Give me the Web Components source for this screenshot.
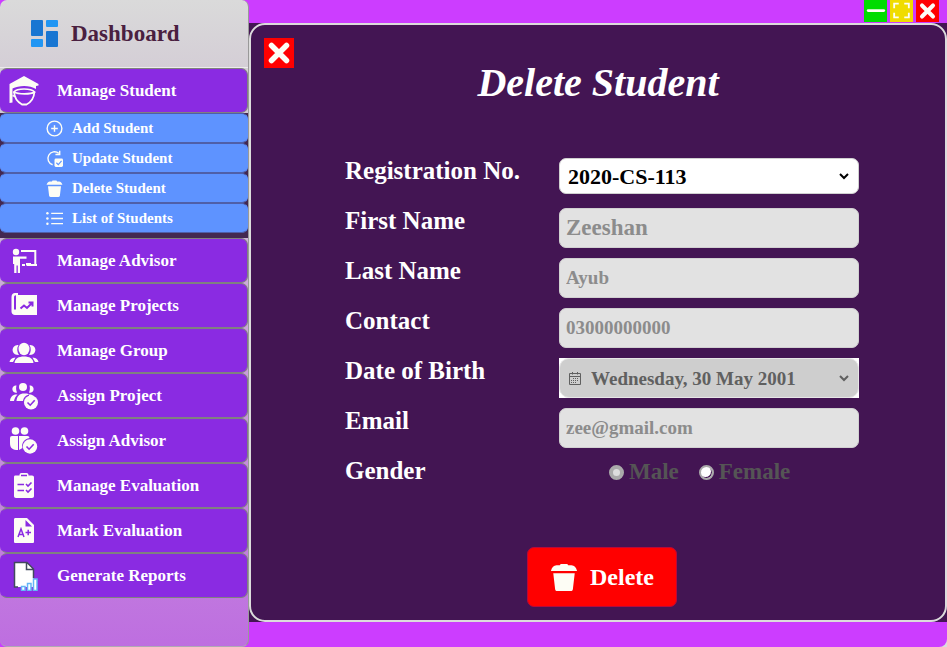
<!DOCTYPE html>
<html lang="en">
<head>
<meta charset="utf-8">
<title>Delete Student</title>
<style>
html, body { margin: 0; height: 100%; }
body { background: #dcdcdc; font-family: Georgia, "Liberation Serif", serif; font-weight: 700; }
</style>
</head>
<body>
<student-app></student-app>
<script>
const svg = (box, body) => `<svg viewBox="0 0 ${box} ${box}" aria-hidden="true">${body}</svg>`;
const ICONS = {
  dashboard: svg(28, '<path fill="#1976d2" d="M2 0h9a1 1 0 0 1 1 1v14a1 1 0 0 1-1 1H1a1 1 0 0 1-1-1V1a1 1 0 0 1 1-1zM16 11h10a1 1 0 0 1 1 1v14a1 1 0 0 1-1 1H16a1 1 0 0 1-1-1V12a1 1 0 0 1 1-1z"/><path fill="#2196f3" d="M16 0h10a1 1 0 0 1 1 1v5a1 1 0 0 1-1 1H16a1 1 0 0 1-1-1V1a1 1 0 0 1 1-1zM1 19h10a1 1 0 0 1 1 1v6a1 1 0 0 1-1 1H1a1 1 0 0 1-1-1v-6a1 1 0 0 1 1-1z"/>'),
  student: svg(30, '<path d="M15 0 29.500 8v1.500L27 10v3C21 9 10 9 3.500 12.500V26.500L.5 27V8z"/><path d="M5 16C8 12 22 12 25.500 16 22 18.500 9 18.500 5 16z" fill="none" stroke="currentColor" stroke-width="1.600"/><path d="M5 15.500c.3 6.500 4.500 11 8 13h4.500c4-2 7.500-6.500 8-13" fill="none" stroke="currentColor" stroke-width="1.800"/><path d="M3.500 19.500l2.500 1" stroke="currentColor" stroke-width="1.500"/>'),
  add: svg(18, '<g fill="none" stroke="currentColor" stroke-width="1.500"><circle cx="9" cy="9" r="7.800"/><path d="M9 5.500v7M5.500 9h7"/></g>'),
  update: svg(18, '<path d="M13.500 3.500A7 7 0 1 0 7 15.600M14.500.8v4h-4.500" fill="none" stroke="currentColor" stroke-width="1.500"/><rect x="9" y="9" width="9" height="9" rx="1.500"/><path d="m11 13.500 2 2 3.500-4" fill="none" stroke="#5e93ff" stroke-width="1.200"/>'),
  trash: svg(30, '<path d="M10.500 2.500 11.500 1h7l1 1.500h3.500c3 0 5 2.500 6 6H1c1-3.500 3-6 6-6zM3.500 11h23l-2 17c-.2 1.300-1 2-2.500 2H8c-1.500 0-2.300-.7-2.500-2z"/>'),
  list: svg(18, '<path d="M5.500 3.500H18M5.500 9H18M5.500 14.500H18" stroke="currentColor" stroke-width="1.400"/><circle cx="1.500" cy="3.500" r="1.300"/><circle cx="1.500" cy="9" r="1.300"/><circle cx="1.500" cy="14.500" r="1.300"/>'),
  advisor: svg(30, '<circle cx="7" cy="6" r="3.200"/><path d="M4 10.500h13.500v2.200H11V27H8.800v-7.500H7.500V27H5.200v-9H4z"/><path d="M12 5h14.300v14H17.500M24 19h4M13 19h3" fill="none" stroke="currentColor" stroke-width="2"/><path d="M17 17h5v2h-5z"/>'),
  projects: svg(30, '<path d="M9 4h19v20H6c-2 0-3.500-1.200-3.500-3.500V6C2.500 3.500 4 2 6 2h3z"/><path d="M5 6.500c0-1.500.6-2.300 2-2.300V18.500H5z" fill="#8a2be2"/><path d="m11.500 17.500 3.500-3 3 2.500 5-5M19.500 11.500h4v4" fill="none" stroke="#8a2be2" stroke-width="2"/>'),
  group: svg(30, '<path d="M6.500 9.500a5 5 0 0 1 3-.5c-2 3.500-1.500 7 .5 10l-2.500-.2C3 17.500 2 12 6.500 9.500zM23.500 9.500a5 5 0 0 0-3-.5c2 3.500 1.500 7-.5 10l2.500-.2C27 17.500 28 12 23.500 9.500zM.5 26c.3-2.500 2-4 6-4.600L4 26zM29.500 26c-.3-2.500-2-4-6-4.600L26 26z"/><ellipse cx="15" cy="13" rx="5.500" ry="6.200"/><path d="M5.500 27c.5-4.500 4-6.500 9.500-6.500s9 2 9.500 6.500z"/>'),
  assignProject: svg(30, '<circle cx="14" cy="6" r="4"/><path d="M7.500 4.500c-3 0-4.500 2-4 4.500s3 3 4.500 2.500c-1-2.500-1.200-4.500-.5-7zM20.500 4.500c3 0 4.500 2 4 4.500s-3 3-4.500 2.500c1-2.500 1.200-4.500.5-7zM1 20c.5-4.500 3-7 7.500-6.500C6.500 15.500 5.500 17.500 5 20zM7.500 20c.5-5.500 3.500-8 9-7.500 1.500 0 2.700.4 3.500 1-4 1-5.500 3.500-6 6.500zM20 13.500h2l3 1.500h-5z"/><circle cx="22" cy="21.500" r="7"/><path d="m18.500 21.500 2.700 2.700 4.500-5" fill="none" stroke="#8a2be2" stroke-width="1.600"/>'),
  assignAdvisor: svg(30, '<circle cx="6.500" cy="5" r="3.800"/><circle cx="15.500" cy="5" r="3.800"/><path d="M1 12q0-2 2-2h6v14c-5 0-8-1.500-8-7zM10 10h8.500q2 0 2 2c-5 1-8.500 5-7 10l-3.500 2z"/><circle cx="21" cy="20.500" r="7.200"/><path d="m17.500 20.500 2.600 2.700 4.600-5" fill="none" stroke="#8a2be2" stroke-width="1.600"/>'),
  evaluation: svg(30, '<path d="M6 4.500h4.500V4c0-1.200.8-2 2-2h5c1.200 0 2 .8 2 2v.5H23c1.300 0 2 .7 2 2V25c0 1.300-.7 2-2 2H7c-1.300 0-2-.7-2-2V6.500c0-1.300.3-2 1-2z"/><path d="M12 4.500h6M8.500 13.500H15M8.500 19.500H15M17 13l2 2 3.500-3.500M17 19l2 2 3.500-3.500" fill="none" stroke="#8a2be2" stroke-width="1.600"/>'),
  mark: svg(30, '<path d="M6.500 2H18l7 7v16.500c0 1-.5 1.500-1.500 1.500h-17c-1 0-1.500-.5-1.500-1.500v-22C5 2.500 5.500 2 6.500 2z"/><path d="M9 21l3-8 3 8M10.200 18.500h3.800M16.500 16.500H22M19.200 13.800v5.500" fill="none" stroke="#8a2be2" stroke-width="1.500"/><path d="M16.500 4v6.500H23z" fill="#8a2be2"/>'),
  reports: svg(30, '<path d="M5.500 1.500h12.500l6.500 6.500v18h-19z" fill="#fff"/><path d="M9 26H5.500V1.500H18l6.500 6.500v9M17.500 2v6.500H24" fill="none" stroke="#424a5e" stroke-width="1.500"/><g fill="#fff" stroke="#64b5f6" stroke-width="1.500"><path d="M12.500 25.500H16v4h-3.500zM18.500 22.500H22v7h-3.500zM24.500 18H28v11.500h-3.500z"/></g>'),
  close: svg(30, '<path d="M7.500 7.500l15 15M22.500 7.500l-15 15" stroke="currentColor" stroke-width="5.500" stroke-linecap="round"/>'),
  minimize: svg(24, '<path d="M4 11.500h17" stroke="currentColor" stroke-width="3" stroke-linecap="round"/>'),
  maximize: svg(24, '<path d="M4 9V4h5M15 4h5v5M20 14v5h-5M9 19H4v-5" fill="none" stroke="currentColor" stroke-width="2"/>'),
  calendar: svg(14, '<path d="M1.500 2.500h11v11h-11zM1.500 5.500h11M4.500 1v2.500M9.500 1v2.500" fill="none" stroke="currentColor"/><path d="M5 7.500h6M3 9.500h8M3 11.500h6" stroke="currentColor" stroke-dasharray="1 1"/>'),
  chevron: svg(10, '<path d="m1 3 4 4 4-4" fill="none" stroke="currentColor" stroke-width="2"/>')
};

class Base extends HTMLElement {
  connectedCallback() {
    if (this.shadowRoot) return;
    this.attachShadow({ mode: "open" }).innerHTML =
      `<style>*{box-sizing:border-box}button,input,select{font:inherit}${this.css()}</style>${this.html()}`;
  }
}

customElements.define("app-icon", class extends Base {
  css() { return `:host{display:block;flex:none}svg{display:block;width:100%;height:100%;fill:currentColor}`; }
  html() { return ICONS[this.getAttribute("name")]; }
});

customElements.define("nav-item", class extends Base {
  css() { return `:host{display:block;font-size:17px}
    button{display:flex;align-items:center;gap:18px;width:100%;height:45px;padding:0 8px;border:1px solid #808080;border-left-color:#8a2be2;border-radius:7px;background:#8a2be2;color:#fff;cursor:pointer}
    app-icon{width:30px;height:30px;color:#fdfdf5}`; }
  html() { return `<button type="button"><app-icon name="${this.getAttribute("icon")}"></app-icon><slot></slot></button>`; }
});

customElements.define("sub-item", class extends Base {
  css() { return `:host{display:block;font-size:15px}
    button{display:flex;align-items:center;gap:9px;width:100%;height:30px;padding:0 45px;border:1px solid #4f5fa8;border-left-color:#5e93ff;border-right-color:#5e93ff;border-radius:6px;background:#5e93ff;color:#fff;cursor:pointer}
    app-icon{width:17px;height:17px;color:#fdfdf5}`; }
  html() { return `<button type="button"><app-icon name="${this.getAttribute("icon")}"></app-icon><slot></slot></button>`; }
});

customElements.define("side-nav", class extends Base {
  css() { return `:host{display:block;box-sizing:border-box;border-right:1px solid #999;border-bottom:1px solid #b0a8b4;border-radius:7px;overflow:hidden;background:linear-gradient(#dadada,#d4ced6 68px,#be6ee0)}
    header{display:flex;align-items:center;gap:12px;height:68px;padding:0 31px;border-bottom:1px solid #ececec;font-size:23px;color:#4a2040}
    header app-icon{width:28px;height:28px}
    .sub{height:125px;background:#432850}`; }
  html() { return `<header><app-icon name="dashboard"></app-icon><span>Dashboard</span></header>
    <nav>
      <nav-item icon="student">Manage Student</nav-item>
      <div class="sub">
        <sub-item icon="add">Add Student</sub-item>
        <sub-item icon="update">Update Student</sub-item>
        <sub-item icon="trash">Delete Student</sub-item>
        <sub-item icon="list">List of Students</sub-item>
      </div>
      <nav-item icon="advisor">Manage Advisor</nav-item>
      <nav-item icon="projects">Manage Projects</nav-item>
      <nav-item icon="group">Manage Group</nav-item>
      <nav-item icon="assignProject">Assign Project</nav-item>
      <nav-item icon="assignAdvisor">Assign Advisor</nav-item>
      <nav-item icon="evaluation">Manage Evaluation</nav-item>
      <nav-item icon="mark">Mark Evaluation</nav-item>
      <nav-item icon="reports">Generate Reports</nav-item>
    </nav>`; }
});

customElements.define("icon-button", class extends Base {
  css() { return `:host{display:block}
    button{display:block;width:100%;height:100%;padding:0;border:0;background:var(--fill,#f00);color:#fdfdf5;cursor:pointer}
    app-icon{width:100%;height:100%}`; }
  html() { return `<button type="button" aria-label="${this.getAttribute("label")}"><app-icon name="${this.getAttribute("icon")}"></app-icon></button>`; }
});

customElements.define("form-row", class extends Base {
  css() { return `:host{display:grid;grid-template-columns:214px 1fr;align-items:start;height:50px}
    label{font-size:25px;line-height:26px;color:#fff}
    .box{position:relative;display:block}
    input,select{display:block;width:100%;height:40px;margin:0;padding:0 6px;border:1px solid #d0d0d0;border-radius:7px;outline:0;appearance:none;background:#e2e2e2;color:#8c8c8c;font-size:19px;opacity:1}
    input.big{font-size:23px}
    select.live{height:36px;background:#fff;color:#000;font-size:22px;padding:0 8px}
    .date{background:#fff}
    .date select{background:#cecece;border-color:#e6e6e6;border-radius:10px;color:#606060;padding:0 31px}
    .chev{position:absolute;right:10px;top:0;bottom:0;margin:auto;width:10px;height:10px;color:#000;pointer-events:none}
    .date app-icon{color:#606060}
    .cal{position:absolute;left:9px;top:0;bottom:0;margin:auto;width:14px;height:14px;pointer-events:none}`; }
  html() {
    const v = this.getAttribute("value"), l = this.getAttribute("label"), k = this.getAttribute("kind");
    const chev = '<app-icon class="chev" name="chevron"></app-icon>';
    const field = k === "select" ? `<select id="f" class="live"><option>${v}</option></select>${chev}`
      : k === "date" ? `<select id="f" disabled><option>${v}</option></select><app-icon class="cal" name="calendar"></app-icon>${chev}`
      : `<input id="f" class="${k || ""}" type="text" value="${v}" disabled>`;
    return `<label for="f">${l}</label><span class="box ${k === "date" ? "date" : ""}">${field}</span>`;
  }
});

customElements.define("gender-row", class extends Base {
  css() { return `:host{display:block;height:50px}
    fieldset{display:grid;grid-template-columns:214px 1fr;min-width:0;margin:0;padding:0;border:0;line-height:26px}
    .title{font-size:25px;color:#fff}
    .choices{display:flex;gap:20px;padding-left:50px;padding-top:1px}
    label{display:flex;align-items:center;gap:5px;font-size:23px;color:#555}
    input{appearance:none;width:15px;height:15px;margin:0;border:2px solid #aaa;border-radius:50%;background:#fff}
    input:checked{border:4px solid #aaa;background:#ddd}
    input:not(:checked){box-shadow:inset -1px -1px 0 #431553}`; }
  html() { return `<fieldset aria-labelledby="g"><span class="title" id="g">Gender</span><div class="choices">
    <label><input type="radio" name="gender" checked disabled>Male</label>
    <label><input type="radio" name="gender" disabled>Female</label></div></fieldset>`; }
});

customElements.define("delete-panel", class extends Base {
  css() { return `:host{display:block;background:#431553;color:#fff}
    section{position:relative;height:100%;border:2px solid #dcdcdc;border-radius:16px}
    .close{position:absolute;left:13px;top:13px;width:30px;height:30px}
    h1{margin:0;padding-top:38px;text-align:center;font-size:40px;line-height:40px;font-style:italic}
    .body{padding-left:8px}
    form{width:514px;max-width:100%;margin:0 auto;padding-top:55px}
    .delete{display:flex;align-items:center;justify-content:center;gap:12px;width:150px;height:60px;margin:39px auto 0;padding:0;border:1px solid #b8083a;border-radius:7px;background:#f00;color:#fff;font-size:24px;cursor:pointer}
    .delete app-icon{width:28px;height:30px;color:#fdfdf5}`; }
  html() { return `<section>
    <icon-button class="close" icon="close" label="Close form"></icon-button>
    <h1>Delete Student</h1>
    <div class="body"><form>
      <form-row kind="select" label="Registration No." value="2020-CS-113"></form-row>
      <form-row kind="big" label="First Name" value="Zeeshan"></form-row>
      <form-row label="Last Name" value="Ayub"></form-row>
      <form-row label="Contact" value="03000000000"></form-row>
      <form-row kind="date" label="Date of Birth" value="Wednesday, 30 May 2001"></form-row>
      <form-row label="Email" value="zee@gmail.com"></form-row>
      <gender-row></gender-row>
      <button class="delete" type="button"><app-icon name="trash"></app-icon>Delete</button>
    </form></div></section>`; }
});

customElements.define("student-app", class extends Base {
  css() { return `:host{display:grid;grid-template-columns:249px 1fr;min-height:100%;background:#cc3dff;border-radius:0 0 8px 0}
    main{display:grid;grid-template-rows:23px 1fr 25px}
    .bar{display:flex;justify-content:flex-end;gap:3px;padding-right:8px}
    .bar icon-button{width:23px;height:22px}
    .min{--fill:#00dc00}.max{--fill:#f0dc00}`; }
  html() { return `<side-nav></side-nav><main><div class="bar">
    <icon-button class="min" icon="minimize" label="Minimize"></icon-button>
    <icon-button class="max" icon="maximize" label="Maximize"></icon-button>
    <icon-button icon="close" label="Close"></icon-button></div>
    <delete-panel></delete-panel></main>`; }
});
</script>
</body>
</html>
